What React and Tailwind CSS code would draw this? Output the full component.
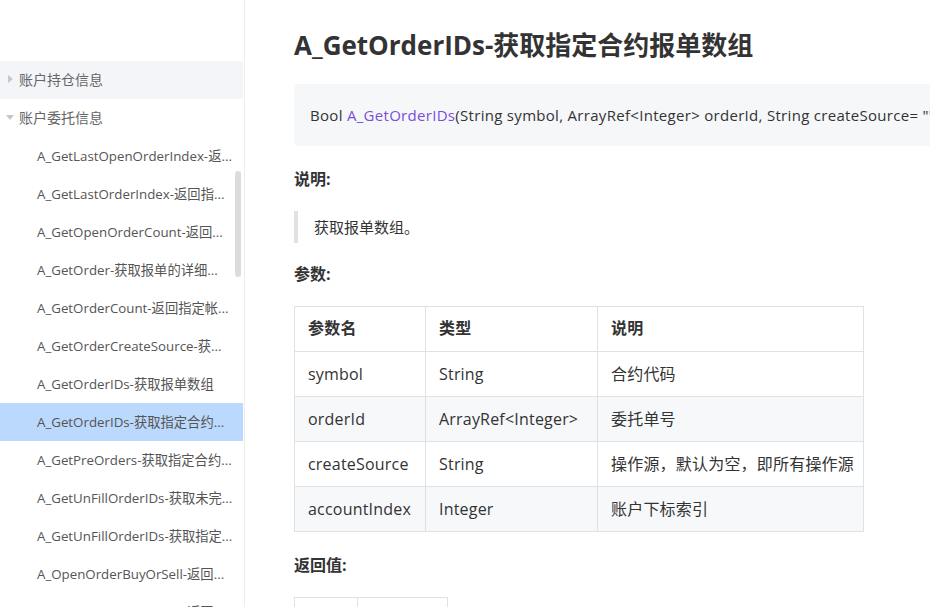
import React from 'react';

const font = { fontFamily: '"Open Sans", "Noto Sans CJK SC", sans-serif' };

const children = [
  'A_GetLastOpenOrderIndex-返...',
  'A_GetLastOrderIndex-返回指...',
  'A_GetOpenOrderCount-返回...',
  'A_GetOrder-获取报单的详细...',
  'A_GetOrderCount-返回指定帐...',
  'A_GetOrderCreateSource-获...',
  'A_GetOrderIDs-获取报单数组',
  'A_GetOrderIDs-获取指定合约...',
  'A_GetPreOrders-获取指定合约...',
  'A_GetUnFillOrderIDs-获取未完...',
  'A_GetUnFillOrderIDs-获取指定...',
  'A_OpenOrderBuyOrSell-返回...',
  'A_OpenOrderBuyOrSell-返回...',
];

const params = [
  ['symbol', 'String', '合约代码'],
  ['orderId', 'ArrayRef<Integer>', '委托单号'],
  ['createSource', 'String', '操作源，默认为空，即所有操作源'],
  ['accountIndex', 'Integer', '账户下标索引'],
];

const Sidebar = () => (
  <div className="relative w-[245px] shrink-0 h-full border-r border-[#ececec] overflow-hidden bg-white">
    <div className="pt-[61px]">
      <div className="h-[38px] flex items-center pb-[2px] bg-[#f4f5f8] mr-[1px] text-[14px] text-[#666]">
        <span className="w-[19px] flex justify-center pl-[2px]">
          <span className="w-0 h-0 border-y-[4px] border-y-transparent border-l-[5px] border-l-[#c7c7c7]" />
        </span>
        账户持仓信息
      </div>
      <div className="h-[38px] flex items-center pb-[2px] text-[14px] text-[#666]">
        <span className="w-[19px] flex justify-center pl-[1px]">
          <span className="w-0 h-0 border-x-[4px] border-x-transparent border-t-[5px] border-t-[#c7c7c7]" />
        </span>
        账户委托信息
      </div>
      {children.map((c, i) => (
        <div
          key={i}
          className={`h-[38px] flex items-center pt-[1px] pl-[37px] text-[13.3px] text-[#555] whitespace-nowrap ${
            i === 7 ? 'bg-[#bad9fc] mr-[1px]' : ''
          }`}
        >
          {c}
        </div>
      ))}
    </div>
    <div className="absolute left-[235px] top-[171px] w-[6px] h-[106px] rounded-full bg-[#dcdcdc]" />
  </div>
);

const App = () => {
  return (
    <div className="w-[930px] h-[607px] flex overflow-hidden bg-white text-[#333]" style={font}>
      <Sidebar />
      <div className="flex-1 min-w-0 pl-[49px] pt-[26px] overflow-hidden">
        <h1 className="text-[26px] font-bold leading-[38px] text-[#333] whitespace-nowrap">
          A_GetOrderIDs-获取指定合约报单数组
        </h1>
        <div className="mt-[20px] h-[62px] w-[700px] rounded-[4px] bg-[#f6f7f9] flex items-center pl-[16px] text-[15px] tracking-[0.3px] whitespace-nowrap">
          <span>Bool&nbsp;</span>
          <span className="text-[#7a4ed9]">A_GetOrderIDs</span>
          <span>(String symbol, ArrayRef&lt;Integer&gt; orderId, String createSource= ""</span>
        </div>
        <div className="mt-[22px] text-[16px] font-bold leading-[22px]">说明:</div>
        <div className="mt-[21px] border-l-[4px] border-[#dfe2e5] h-[32px] flex items-center pl-[16px] text-[15px]">
          获取报单数组。
        </div>
        <div className="mt-[20px] text-[16px] font-bold leading-[22px]">参数:</div>
        <table className="mt-[21px] border-collapse text-[16px] tracking-[0.2px] w-[570px]">
          <thead>
            <tr className="h-[45px]">
              <th className="border border-[#dfe2e5] text-left font-bold pl-[13px] pb-[2px] w-[131px]">参数名</th>
              <th className="border border-[#dfe2e5] text-left font-bold pl-[13px] pb-[2px] w-[172px]">类型</th>
              <th className="border border-[#dfe2e5] text-left font-bold pl-[13px] pb-[2px]">说明</th>
            </tr>
          </thead>
          <tbody>
            {params.map((p, i) => (
              <tr key={i} className={`h-[45px] ${i % 2 === 1 ? 'bg-[#f6f8fa]' : ''}`}>
                {p.map((cell, j) => (
                  <td key={j} className="border border-[#dfe2e5] pl-[13px] pb-[1px] whitespace-nowrap">
                    {cell}
                  </td>
                ))}
              </tr>
            ))}
          </tbody>
        </table>
        <div className="mt-[22px] text-[16px] font-bold leading-[22px]">返回值:</div>
        <table className="mt-[21px] border-collapse text-[16px]">
          <tbody>
            <tr className="h-[45px]">
              <td className="border border-[#dfe2e5] w-[63px]"></td>
              <td className="border border-[#dfe2e5] w-[90px]"></td>
            </tr>
          </tbody>
        </table>
      </div>
    </div>
  );
};

export default App;
